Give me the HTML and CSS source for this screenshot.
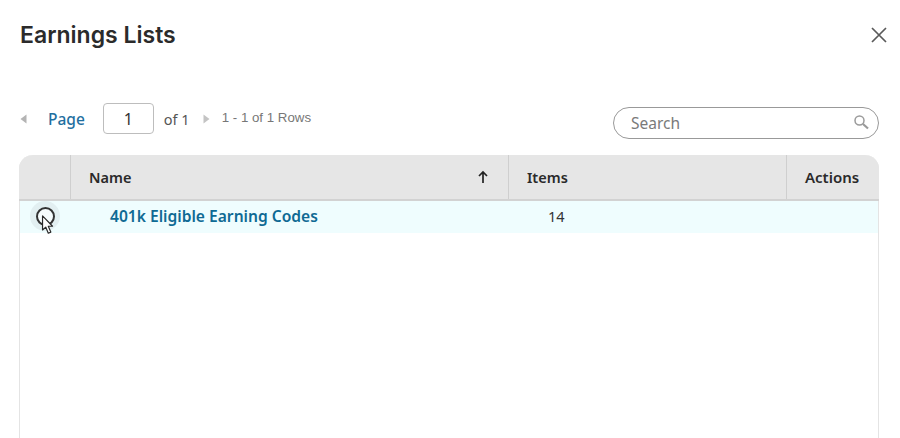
FILE: index.html
```html
<!DOCTYPE html>
<html lang="en">
<head>
<meta charset="utf-8">
<title>Earnings Lists</title>
<link rel="stylesheet" href="styles.css">
</head>
<body>
<div class="dialog">
  <header class="head">
    <h1 class="title">Earnings Lists</h1>
    <svg class="close" width="18" height="18" viewBox="0 0 18 18" aria-label="Close"><path d="M2 2L16 16M16 2L2 16" fill="none" stroke="#5a5a5a" stroke-width="1.7"/></svg>
  </header>
  <div class="toolbar">
    <div class="pager">
      <svg class="arrow" width="7" height="10" viewBox="0 0 7 10"><path d="M6.5 0.5V9.500L0.500 5Z" fill="#b4b4b4"/></svg>
      <span class="page-label">Page</span>
      <span class="page-input">1</span>
      <span class="page-of">of 1</span>
      <svg class="arrow" width="7" height="10" viewBox="0 0 7 10"><path d="M0.500 0.500V9.500L6.500 5Z" fill="#c4c4c4"/></svg>
      <span class="rows">1 - 1 of 1 Rows</span>
    </div>
    <div class="search">
      <span class="search-text">Search</span>
      <svg width="16" height="16" viewBox="0 0 16 16"><circle cx="6.500" cy="6.500" r="4.500" fill="none" stroke="#9a9a9a" stroke-width="1.500"/><path d="M10 10L15 14.500" stroke="#9a9a9a" stroke-width="2.200"/></svg>
    </div>
  </div>
  <div class="table">
    <div class="row-head">
      <div class="cell-select"></div>
      <div class="cell-name th">Name<svg width="12" height="14" viewBox="0 0 12 14"><path d="M6 13V2.500M2 6L6 2L10 6" fill="none" stroke="#222" stroke-width="1.700"/></svg></div>
      <div class="cell-items th">Items</div>
      <div class="cell-actions th">Actions</div>
    </div>
    <div class="row">
      <div class="select-wrap"><span class="halo"><span class="radio"></span></span></div>
      <a class="link">401k Eligible Earning Codes</a>
      <div class="count">14</div>
    </div>
    <svg class="cursor" width="14" height="20" viewBox="0 0 15 22"><path d="M1.500 1V16.500L5 13.300L7.800 20L10.600 18.800L7.800 12.400H12.500Z" fill="#fff" stroke="#2a2a2a" stroke-width="1.300" stroke-linejoin="round"/></svg>
  </div>
</div>
</body>
</html>
```
FILE: styles.css
```css
* { box-sizing: border-box; }
html, body { margin: 0; height: 100%; overflow: hidden; }
body { background: #fff; color: #222; font-family: "Noto Sans", "Liberation Sans", sans-serif; }
.dialog { width: 900px; height: 438px; padding: 0 21px 0 19px; display: flex; flex-direction: column; }
.head { display: flex; align-items: center; justify-content: space-between; height: 70px; }
.title { margin: 0 0 0 1px; font: 600 23px/1 Inter, sans-serif; color: #2b2b2b; }
.close { margin: 0 -9px 0 0; }
.toolbar { display: flex; align-items: flex-start; justify-content: space-between; height: 85px; }
.pager { display: flex; align-items: center; margin: 33px 0 0 1px; height: 31px; }
.pager .arrow:first-child { margin-right: 21px; }
.page-label { color: #1f6f9f; font-size: 15.500px; font-weight: 500; margin-right: 18px; }
.page-input { width: 51px; height: 31px; border: 1px solid #bdbdbd; border-radius: 4px; display: flex; align-items: center; justify-content: center; font-size: 16px; color: #333; margin-right: 10px; }
.page-of { font-size: 14.500px; color: #555; margin-right: 13px; }
.rows { font-size: 13.300px; color: #777; margin-left: 12px; margin-top: -2px; font-family: "Liberation Sans", sans-serif; }
.search { width: 266px; height: 32px; border: 1px solid #999; border-radius: 16px; display: flex; align-items: center; justify-content: space-between; padding: 0 9px 0 17px; margin-top: 37px; }
.search-text { font-size: 15.500px; color: #7a7a7a; }
.search svg { margin-top: -3px; }
.table { position: relative; flex: 1; border-left: 1px solid #e4e4e4; border-right: 1px solid #e4e4e4; border-radius: 14px 14px 0 0; }
.row-head { display: flex; height: 46px; margin: 0 -1px; background: #e6e6e6; border-bottom: 2px solid #d2d2d2; border-radius: 14px 14px 0 0; }
.th { font-size: 14.500px; font-weight: 600; color: #2a2a2a; display: flex; align-items: center; }
.cell-select { width: 52px; border-right: 1px solid #cfcfcf; }
.cell-name { width: 438px; padding: 0 19px 0 18px; justify-content: space-between; border-right: 1px solid #cfcfcf; }
.cell-items { width: 278px; padding-left: 18px; border-right: 1px solid #cfcfcf; }
.cell-actions { flex: 1; padding-left: 18px; font-size: 15px; }
.row { display: flex; align-items: center; height: 32px; padding-bottom: 2px; background: #effdfe; }
.select-wrap { width: 52px; display: flex; padding-left: 10px; }
.halo { width: 30px; height: 30px; border-radius: 50%; background: #e2eff1; display: flex; align-items: center; justify-content: center; }
.radio { width: 19px; height: 19px; border: 2px solid #333; border-radius: 50%; background: #f5fbfc; }
.link { width: 438px; padding-left: 39px; color: #0f6a94; font-size: 15.600px; font-weight: 600; margin-left: -1px; }
.count { padding-left: 39px; font-size: 14.500px; color: #333; }
.cursor { position: absolute; left: 21px; top: 60px; }
```
